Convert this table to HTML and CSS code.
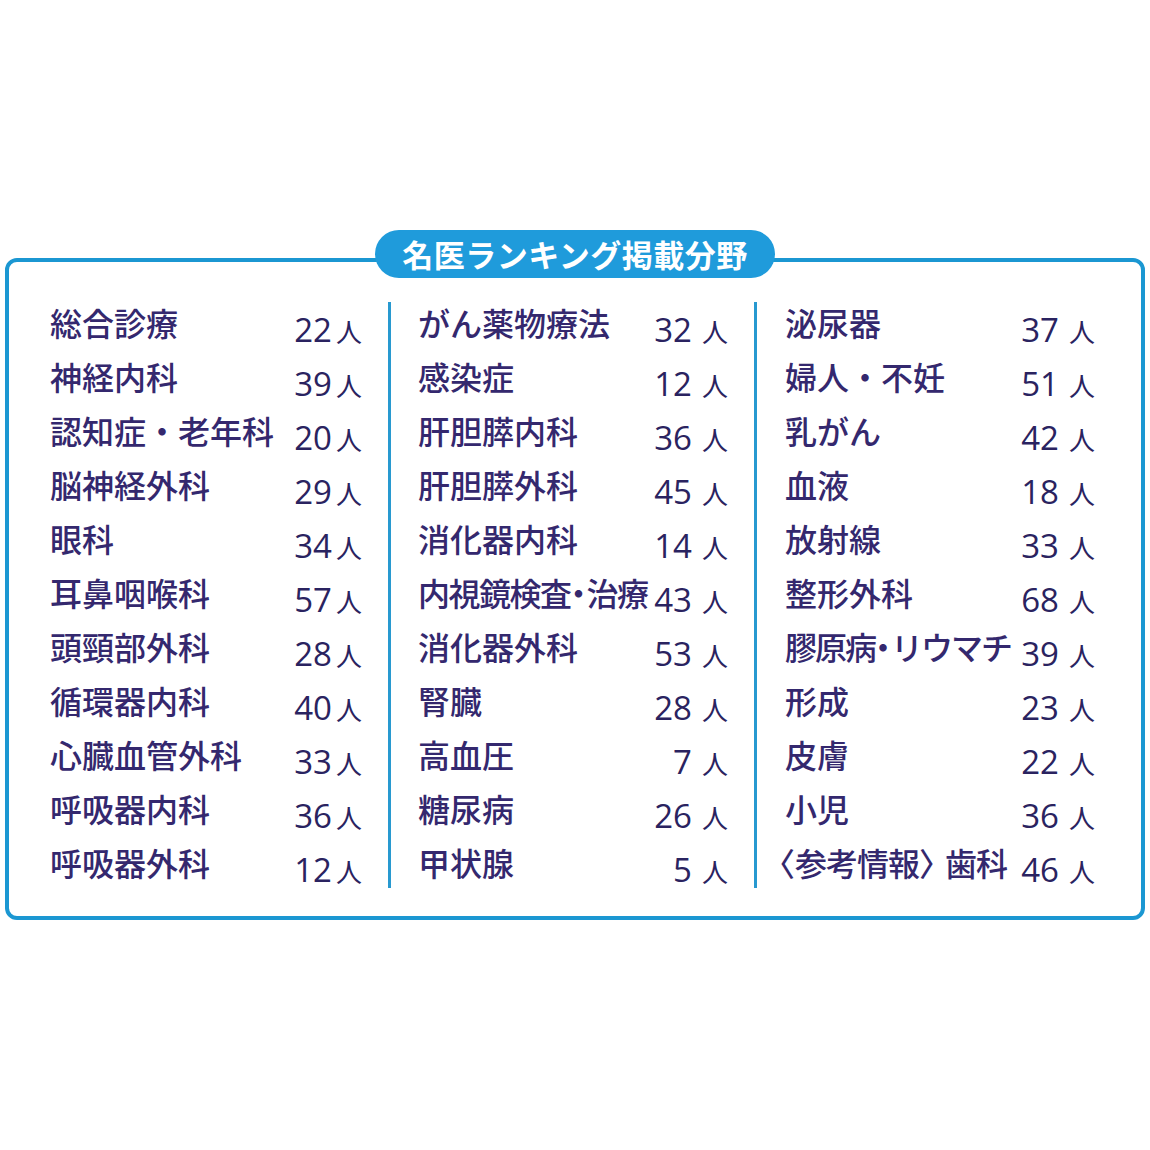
FILE: index.html
```html
<!DOCTYPE html>
<html lang="ja">
<head>
<meta charset="utf-8">
<link rel="stylesheet" href="styles.css">
</head>
<body>
<section class="panel">
  <h1 class="pill">名医ランキング掲載分野</h1>
  <div class="cols">
    <ul class="col c1">
      <li><span class="lbl">総合診療</span><span class="num">22<small>人</small></span></li>
      <li><span class="lbl">神経内科</span><span class="num">39<small>人</small></span></li>
      <li><span class="lbl">認知症・老年科</span><span class="num">20<small>人</small></span></li>
      <li><span class="lbl">脳神経外科</span><span class="num">29<small>人</small></span></li>
      <li><span class="lbl">眼科</span><span class="num">34<small>人</small></span></li>
      <li><span class="lbl">耳鼻咽喉科</span><span class="num">57<small>人</small></span></li>
      <li><span class="lbl">頭頸部外科</span><span class="num">28<small>人</small></span></li>
      <li><span class="lbl">循環器内科</span><span class="num">40<small>人</small></span></li>
      <li><span class="lbl">心臓血管外科</span><span class="num">33<small>人</small></span></li>
      <li><span class="lbl">呼吸器内科</span><span class="num">36<small>人</small></span></li>
      <li><span class="lbl">呼吸器外科</span><span class="num">12<small>人</small></span></li>
    </ul>
    <ul class="col c2">
      <li><span class="lbl">がん薬物療法</span><span class="num">32<small>人</small></span></li>
      <li><span class="lbl">感染症</span><span class="num">12<small>人</small></span></li>
      <li><span class="lbl">肝胆膵内科</span><span class="num">36<small>人</small></span></li>
      <li><span class="lbl">肝胆膵外科</span><span class="num">45<small>人</small></span></li>
      <li><span class="lbl">消化器内科</span><span class="num">14<small>人</small></span></li>
      <li><span class="lbl tight">内視鏡検査<span class="half">・</span>治療</span><span class="num">43<small>人</small></span></li>
      <li><span class="lbl">消化器外科</span><span class="num">53<small>人</small></span></li>
      <li><span class="lbl">腎臓</span><span class="num">28<small>人</small></span></li>
      <li><span class="lbl">高血圧</span><span class="num">7<small>人</small></span></li>
      <li><span class="lbl">糖尿病</span><span class="num">26<small>人</small></span></li>
      <li><span class="lbl">甲状腺</span><span class="num">5<small>人</small></span></li>
    </ul>
    <ul class="col c3">
      <li><span class="lbl">泌尿器</span><span class="num">37<small>人</small></span></li>
      <li><span class="lbl">婦人・不妊</span><span class="num">51<small>人</small></span></li>
      <li><span class="lbl">乳がん</span><span class="num">42<small>人</small></span></li>
      <li><span class="lbl">血液</span><span class="num">18<small>人</small></span></li>
      <li><span class="lbl">放射線</span><span class="num">33<small>人</small></span></li>
      <li><span class="lbl">整形外科</span><span class="num">68<small>人</small></span></li>
      <li><span class="lbl tighter">膠原病<span class="half">・</span>リウマチ</span><span class="num">39<small>人</small></span></li>
      <li><span class="lbl">形成</span><span class="num">23<small>人</small></span></li>
      <li><span class="lbl">皮膚</span><span class="num">22<small>人</small></span></li>
      <li><span class="lbl">小児</span><span class="num">36<small>人</small></span></li>
      <li><span class="lbl ref"><span class="half brk-l">〈</span>参考情報<span class="half brk-r">〉</span>歯科</span><span class="num">46<small>人</small></span></li>
    </ul>
  </div>
</section>
</body>
</html>
```

FILE: styles.css
```css
html, body {
  margin: 0;
  padding: 0;
  background: #ffffff;
}

body {
  width: 1150px;
  height: 1150px;
  padding-top: 258px;
  box-sizing: border-box;
  font-family: "Noto Sans CJK JP", "Noto Sans", sans-serif;
  color: #30266a;
}

.panel {
  position: relative;
  margin: 0 5px;
  height: 662px;
  box-sizing: border-box;
  border: 4px solid #1b97d2;
  border-radius: 12px;
}

.pill {
  position: absolute;
  left: 50%;
  top: -32px;
  transform: translateX(-50%);
  margin: 0;
  width: 400px;
  height: 48px;
  box-sizing: border-box;
  border-radius: 24px;
  background: #1f9bdb;
  color: #ffffff;
  font-size: 31px;
  font-weight: 700;
  line-height: 48px;
  letter-spacing: 0.5px;
  text-align: center;
}

.cols {
  display: grid;
  grid-template-columns: 379px 366px 1fr;
  margin-top: 40px;
}

.col {
  list-style: none;
  margin: 0;
  padding: 0 0 6px 0;
  display: flex;
  flex-direction: column;
  gap: 14px;
}

.c1 { padding-left: 41px; padding-right: 26px; }
.c2 { padding-left: 27px; padding-right: 26px; border-left: 3px solid #2899d0; }
.c3 { padding-left: 28px; padding-right: 46px; border-left: 3px solid #2899d0; }

.col li {
  display: flex;
  justify-content: space-between;
  align-items: baseline;
  height: 40px;
  line-height: 40px;
  white-space: nowrap;
}

.lbl {
  font-size: 32px;
  font-weight: 500;
  color: #34286e;
}

.tight { letter-spacing: -1.5px; }
.tighter { letter-spacing: -2px; }
.ref { letter-spacing: -1px; }

.half {
  font-feature-settings: "halt" 1;
  letter-spacing: 0;
}

.brk-l { margin-left: -6px; }
.brk-r { margin-right: 10px; }

.num {
  font-family: "Open Sans", "Noto Sans", sans-serif;
  font-size: 33px;
  font-weight: 500;
  color: #2a2360;
  position: relative;
  top: 6px;
}

.num small {
  font-family: "Noto Sans CJK JP", sans-serif;
  font-size: 26px;
  font-weight: 400;
  margin-left: 4px;
}

.c2 .num small, .c3 .num small { margin-left: 10px; }
```
